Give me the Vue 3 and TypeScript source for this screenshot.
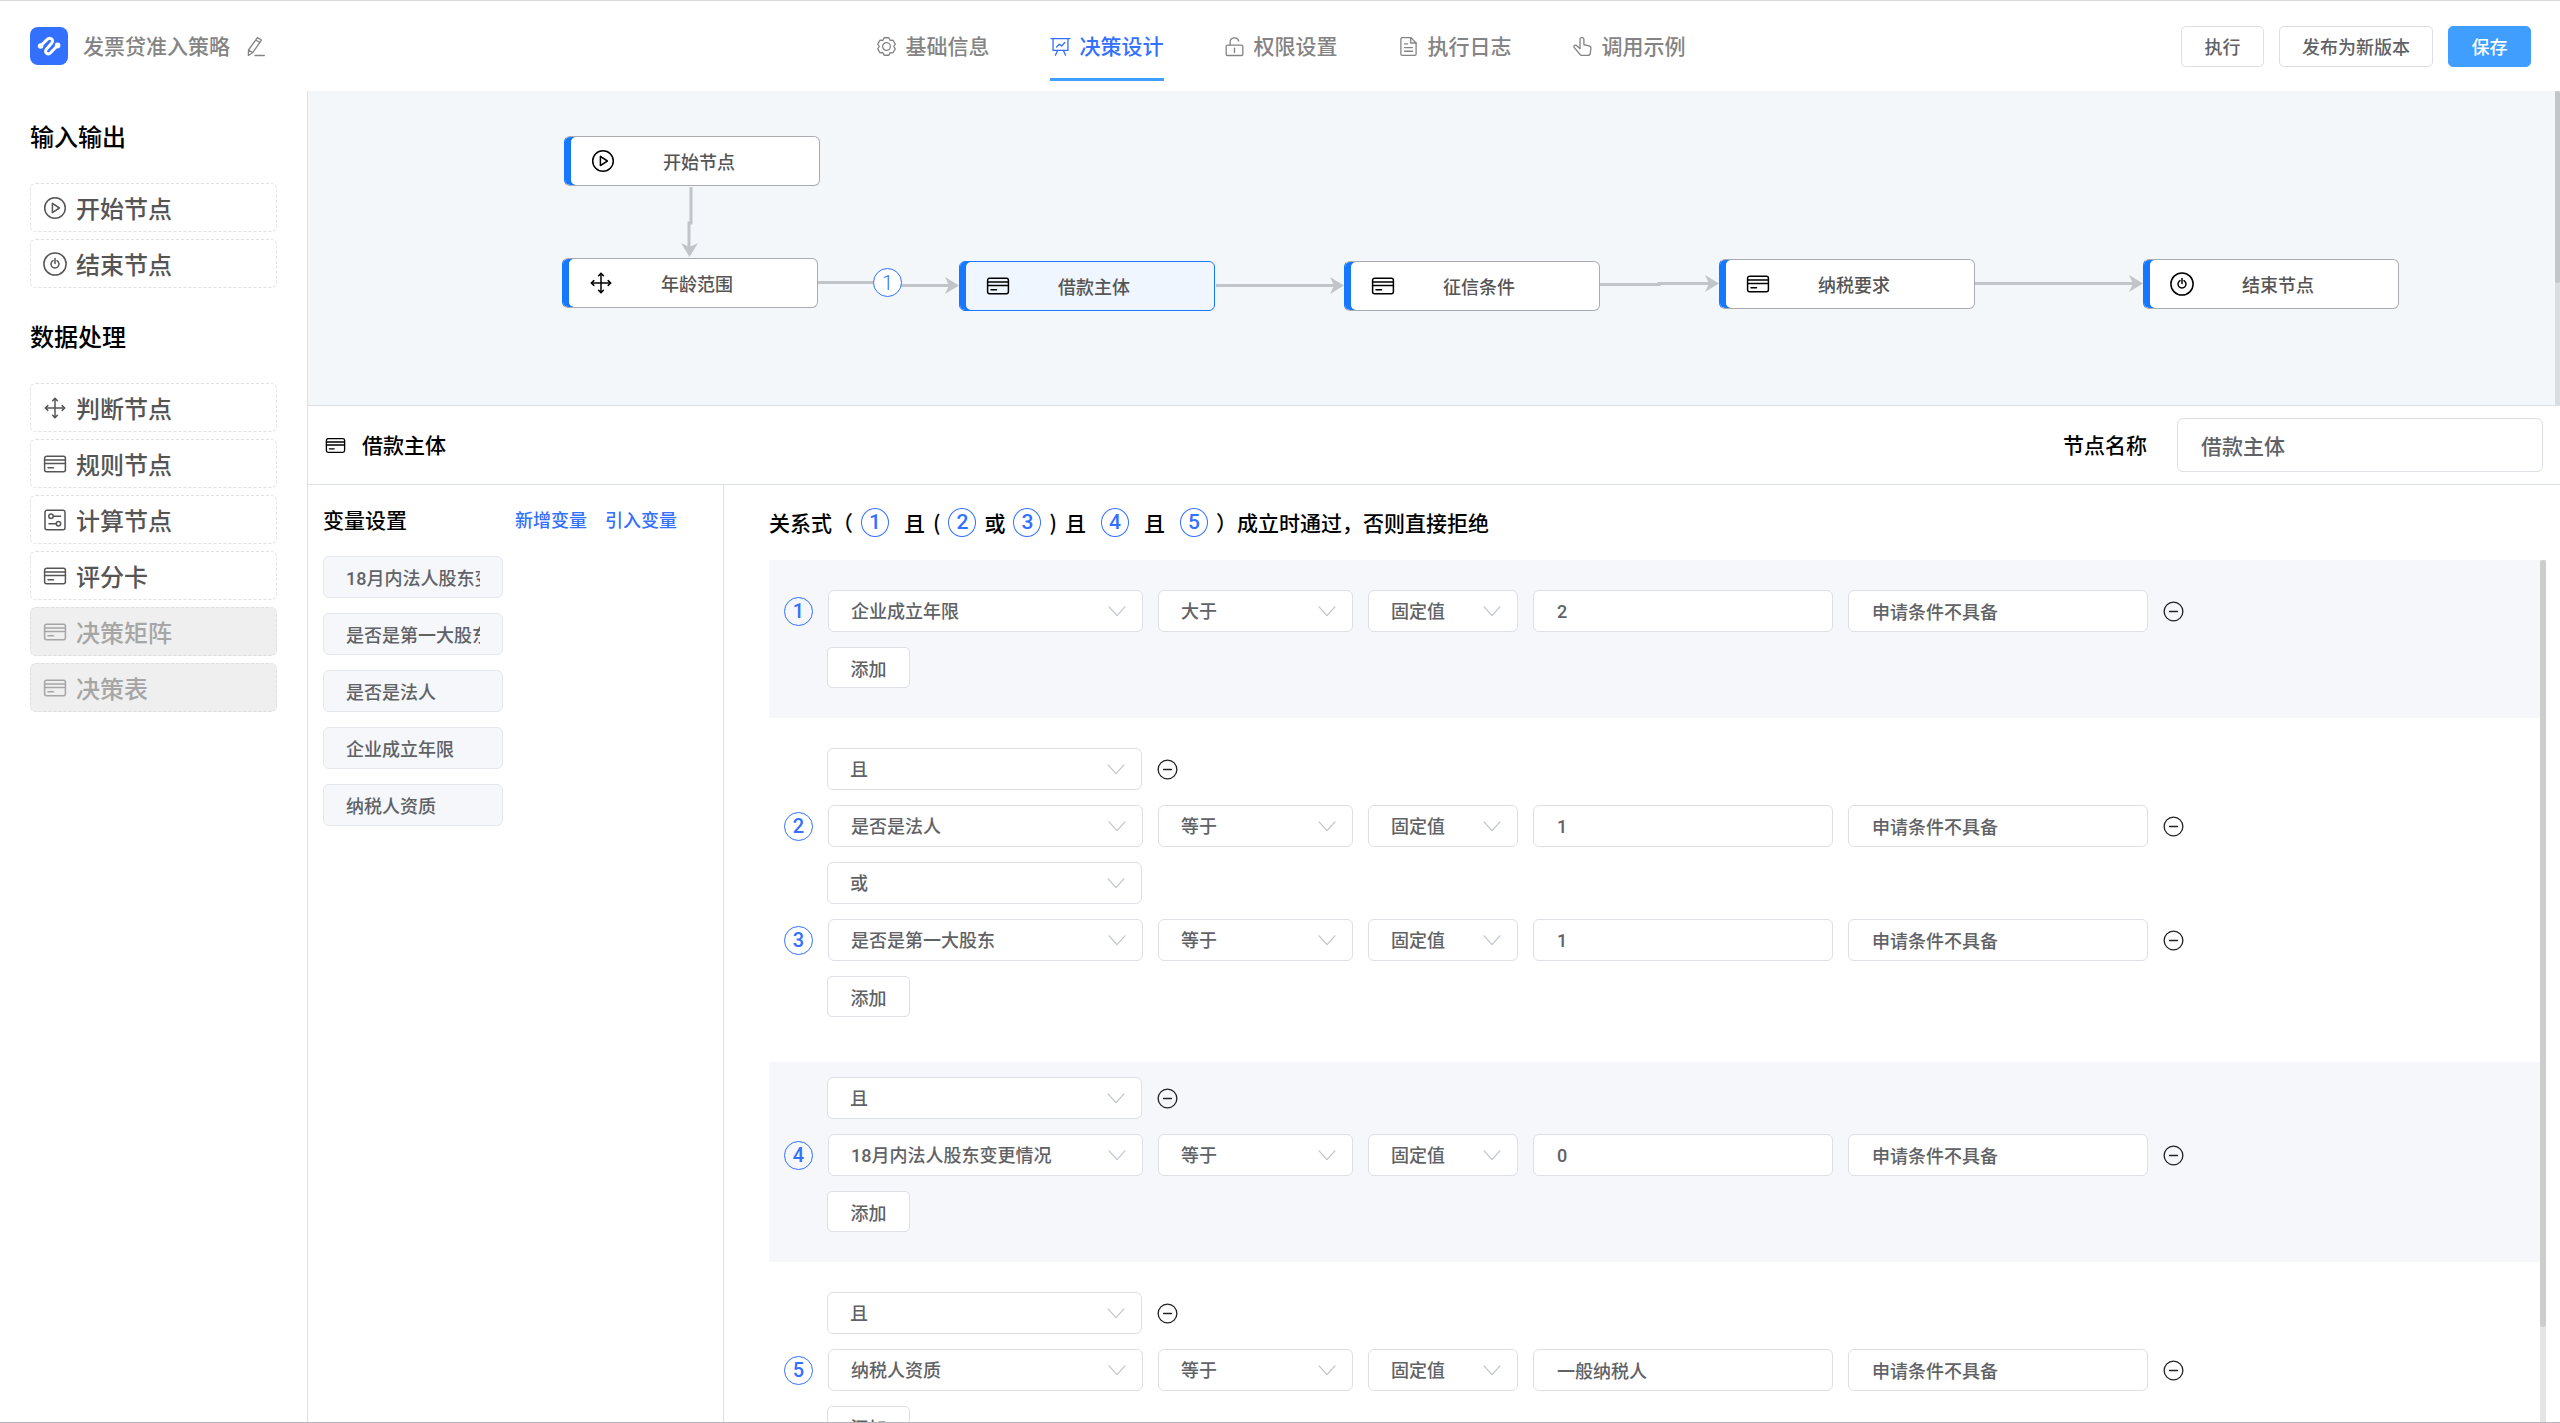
<script setup lang="ts">
import { h, reactive, ref, type FunctionalComponent } from 'vue'

type IconName =
  | 'play' | 'power' | 'move' | 'card' | 'calc' | 'gear' | 'board'
  | 'unlock' | 'doc' | 'pointer' | 'edit' | 'minus' | 'arrow'

// Stroke outlines on a 24 x 24 grid
const icons: Record<IconName, string[]> = {
  play: ['M12 1.7a10.3 10.3 0 1 0 0 20.6a10.3 10.3 0 1 0 0-20.6z', 'M9.4 7.4v9.2l7-4.6z'],
  power: ['M12 .9a11.1 11.1 0 1 0 0 22.2a11.1 11.1 0 1 0 0-22.2z', 'M10 8.6a4 4 0 1 0 4 0', 'M12 6.6v5'],
  move: ['M12 2.4v19.2M2.4 12h19.2', 'M9.6 4.8L12 2.4l2.4 2.4M9.6 19.2l2.4 2.4l2.4-2.4M4.8 9.6L2.4 12l2.4 2.4M19.2 9.6l2.4 2.4l-2.4 2.4'],
  card: ['M3.6 4.2h16.8a2 2 0 0 1 2 2v11.6a2 2 0 0 1-2 2H3.6a2 2 0 0 1-2-2V6.2a2 2 0 0 1 2-2z', 'M1.6 8h20.8M1.6 11.4h20.8M5 15.8h5.5'],
  calc: ['M4 2.2h16a2 2 0 0 1 2 2v15.6a2 2 0 0 1-2 2H4a2 2 0 0 1-2-2V4.2a2 2 0 0 1 2-2z', 'M8 6a2.2 2.2 0 1 0 0 4.4a2.2 2.2 0 1 0 0-4.4zM10.5 8.2h7', 'M15.5 13.6a2.2 2.2 0 1 0 0 4.4a2.2 2.2 0 1 0 0-4.4zM6 15.8h7'],
  gear: ['M9.3 2h5.4l1.5 3l3.3-.2l2.5 4.5l-1.7 2.7l1.7 2.7l-2.5 4.5l-3.3-.2l-1.5 3H9.3l-1.5-3l-3.3.2L2 14.7L3.7 12L2 9.3l2.5-4.5l3.3.2z', 'M12 7.6a4.4 4.4 0 1 0 0 8.8a4.4 4.4 0 1 0 0-8.8z'],
  board: ['M1.2 3h21.6M3.5 3v13.5h17V3', 'M7.5 12.5l3.2-3.2l2.6 2.2l3.6-4', 'M8.6 16.5l-2.4 5.5M15.4 16.5l2.4 5.5'],
  unlock: ['M4 10.5h16a1.5 1.5 0 0 1 1.5 1.5v8.8a1.5 1.5 0 0 1-1.5 1.5H4a1.5 1.5 0 0 1-1.5-1.5V12a1.5 1.5 0 0 1 1.5-1.5z', 'M7 10.5V7.2a5 5 0 0 1 9.8-1.4', 'M12 14v4.8'],
  doc: ['M14.5 1.8H4.8a1.5 1.5 0 0 0-1.5 1.5v17.4a1.5 1.5 0 0 0 1.5 1.5h14.4a1.5 1.5 0 0 0 1.5-1.5V8z', 'M14.5 1.8V8h6.2M7.5 9h3.5M7.5 13.2h9M7.5 17.4h9'],
  pointer: ['M9.2 14.5V4a2.2 2.2 0 0 1 4.4 0v6l5.8 1.3a2.8 2.8 0 0 1 2.2 3l-.7 5.2a3 3 0 0 1-3 2.6h-6.5a3 3 0 0 1-2.4-1.2L2.4 13c-.9-1.3.5-3.2 2.3-2.3z'],
  edit: ['M14.2 1.8l4.6 2.8L9 18.8l-5.2 3.4l.2-6.2zM12.3 4.6l4.7 2.9M4 16.2l4.7 2.7', 'M11.5 22.3H22'],
  minus: ['M12 1.3a10.7 10.7 0 1 0 0 21.4a10.7 10.7 0 1 0 0-21.4z', 'M7.5 12h9'],
  arrow: ['M2.5 7l9.5 10.5L21.5 7'],
}

const Icon: FunctionalComponent<{ name: IconName }> = (props) =>
  h(
    'svg',
    { viewBox: '0 0 24 24', fill: 'none', stroke: 'currentColor', 'stroke-linecap': 'round', 'stroke-linejoin': 'round', 'aria-hidden': 'true' },
    icons[props.name].map((d) => h('path', { d })),
  )
Icon.props = ['name']

const tabs: { label: string; icon: IconName }[] = [
  { label: '基础信息', icon: 'gear' },
  { label: '决策设计', icon: 'board' },
  { label: '权限设置', icon: 'unlock' },
  { label: '执行日志', icon: 'doc' },
  { label: '调用示例', icon: 'pointer' },
]
const activeTab = ref('决策设计')

const palette: { title: string; items: { label: string; icon: IconName; disabled?: boolean }[] }[] = [
  {
    title: '输入输出',
    items: [
      { label: '开始节点', icon: 'play' },
      { label: '结束节点', icon: 'power' },
    ],
  },
  {
    title: '数据处理',
    items: [
      { label: '判断节点', icon: 'move' },
      { label: '规则节点', icon: 'card' },
      { label: '计算节点', icon: 'calc' },
      { label: '评分卡', icon: 'card' },
      { label: '决策矩阵', icon: 'card', disabled: true },
      { label: '决策表', icon: 'card', disabled: true },
    ],
  },
]

// Node positions on the free canvas
const nodes: { label: string; icon: IconName; x: number; y: number }[] = [
  { label: '开始节点', icon: 'play', x: 256, y: 45 },
  { label: '年龄范围', icon: 'move', x: 254, y: 167 },
  { label: '借款主体', icon: 'card', x: 651, y: 170 },
  { label: '征信条件', icon: 'card', x: 1036, y: 170 },
  { label: '纳税要求', icon: 'card', x: 1411, y: 168 },
  { label: '结束节点', icon: 'power', x: 1835, y: 168 },
]
const selectedNode = ref('借款主体')

const edges = [
  'M383 96V132H381V158',
  'M510 191.5H580V194.5H643',
  'M908 194.5H1028',
  'M1292 193.5H1351V192.5H1403',
  'M1667 192.5H1827',
]
const arrows = [
  'M381.5 166l-8.5-14l8.5 4l8.5-4z',
  'M651 194.5l-14-8.5l4 8.5l-4 8.5z',
  'M1036 194.5l-14-8.5l4 8.5l-4 8.5z',
  'M1411 192.5l-14-8.5l4 8.5l-4 8.5z',
  'M1835 192.5l-14-8.5l4 8.5l-4 8.5z',
]

const nodeName = ref('借款主体')
const variables = ['18月内法人股东变更情况', '是否是第一大股东', '是否是法人', '企业成立年限', '纳税人资质']
const operators = ['大于', '等于', '小于']

interface Rule { no: number; join?: string; removable?: boolean; field: string; op: string; kind: string; value: string; reason: string }
const blocks = reactive<Rule[][]>([
  [{ no: 1, field: '企业成立年限', op: '大于', kind: '固定值', value: '2', reason: '申请条件不具备' }],
  [
    { no: 2, join: '且', removable: true, field: '是否是法人', op: '等于', kind: '固定值', value: '1', reason: '申请条件不具备' },
    { no: 3, join: '或', field: '是否是第一大股东', op: '等于', kind: '固定值', value: '1', reason: '申请条件不具备' },
  ],
  [{ no: 4, join: '且', removable: true, field: '18月内法人股东变更情况', op: '等于', kind: '固定值', value: '0', reason: '申请条件不具备' }],
  [{ no: 5, join: '且', removable: true, field: '纳税人资质', op: '等于', kind: '固定值', value: '一般纳税人', reason: '申请条件不具备' }],
])
</script>

<template>
  <div class="page">
    <header class="topbar">
      <div class="brand">
        <svg class="logo" viewBox="0 0 38 38" aria-hidden="true">
          <rect width="38" height="38" rx="8" fill="#3370ff" />
          <path d="M10.5 19L17 12.6C20 9.8 24.5 12.5 21.8 16L16.4 22.2C13.8 25.6 18 28.6 20.8 25.6L27.6 18.5" fill="none" stroke="#fff" stroke-width="3" stroke-linecap="round" stroke-linejoin="round" />
          <circle cx="10.6" cy="19" r="2.8" fill="#fff" />
          <circle cx="27.6" cy="18.4" r="2.8" fill="#fff" />
        </svg>
        <h1 class="brand-name">发票贷准入策略</h1>
        <button class="icon-btn" type="button" aria-label="编辑名称"><Icon name="edit" class="ico-21" /></button>
      </div>
      <nav class="tabs">
        <a v-for="t in tabs" :key="t.label" href="#" class="tab" :class="{ active: t.label === activeTab }" @click.prevent="activeTab = t.label">
          <Icon :name="t.icon" class="ico-21" />{{ t.label }}
        </a>
      </nav>
      <div class="actions">
        <button class="btn" type="button">执行</button>
        <button class="btn" type="button">发布为新版本</button>
        <button class="btn primary" type="button">保存</button>
      </div>
    </header>

    <div class="body">
      <aside class="palette">
        <section v-for="g in palette" :key="g.title" class="group">
          <h2 class="group-title">{{ g.title }}</h2>
          <button v-for="i in g.items" :key="i.label" class="palette-item" type="button" :disabled="i.disabled">
            <Icon :name="i.icon" class="ico-24" />{{ i.label }}
          </button>
        </section>
      </aside>

      <main class="work">
        <section class="canvas">
          <svg class="edges" aria-hidden="true">
            <path v-for="d in edges" :key="d" :d="d" fill="none" stroke="#c0c5c9" stroke-width="3" />
            <path v-for="d in arrows" :key="d" :d="d" fill="#c0c5c9" />
          </svg>
          <span class="edge-label circle">1</span>
          <button
            v-for="n in nodes" :key="n.label" type="button" class="node" :class="{ selected: n.label === selectedNode }"
            :style="{ left: n.x + 'px', top: n.y + 'px' }" @click="selectedNode = n.label"
          >
            <Icon :name="n.icon" class="ico-24" /><span class="node-label">{{ n.label }}</span>
          </button>
          <div class="rail canvas-rail"><div class="thumb canvas-thumb"></div></div>
        </section>

        <div class="detail-head">
          <Icon name="card" class="ico-21" />
          <h2 class="detail-title">借款主体</h2>
          <label class="name-label" for="node-name">节点名称</label>
          <input id="node-name" v-model="nodeName" class="field name-input" type="text" />
        </div>

        <div class="detail">
          <section class="vars">
            <div class="vars-head">
              <h3 class="vars-title">变量设置</h3>
              <a href="#" class="link">新增变量</a>
              <a href="#" class="link">引入变量</a>
            </div>
            <input v-for="v in variables" :key="v" class="field var" type="text" readonly :value="v" :aria-label="v" />
          </section>

          <section class="rules">
            <div class="formula">
              <span>关系式（</span><b class="circle wide-after">1</b><span>且</span><span>(</span><b class="circle">2</b>
              <span>或</span><b class="circle">3</b><span>)</span><span>且</span><b class="circle wide">4</b>
              <span>且</span><b class="circle wide-before">5</b><span>）成立时通过，否则直接拒绝</span>
            </div>
            <div class="scroller">
              <div class="blocks">
                <div v-for="(b, bi) in blocks" :key="bi" class="block">
                  <template v-for="r in b" :key="r.no">
                    <div v-if="r.join" class="row join">
                      <span class="select w-field">
                        <select v-model="r.join" class="field" aria-label="逻辑关系"><option>且</option><option>或</option></select>
                        <Icon name="arrow" class="caret" />
                      </span>
                      <button v-if="r.removable" class="icon-btn dark" type="button" aria-label="删除分组"><Icon name="minus" class="ico-21" /></button>
                    </div>
                    <div class="row">
                      <span class="circle">{{ r.no }}</span>
                      <span class="select w-field">
                        <select v-model="r.field" class="field" aria-label="变量"><option v-for="v in variables" :key="v">{{ v }}</option></select>
                        <Icon name="arrow" class="caret" />
                      </span>
                      <span class="select w-op">
                        <select v-model="r.op" class="field" aria-label="比较符"><option v-for="o in operators" :key="o">{{ o }}</option></select>
                        <Icon name="arrow" class="caret" />
                      </span>
                      <span class="select w-kind">
                        <select v-model="r.kind" class="field" aria-label="值类型"><option>固定值</option><option>变量</option></select>
                        <Icon name="arrow" class="caret" />
                      </span>
                      <input v-model="r.value" class="field w-text" type="text" aria-label="比较值" />
                      <input v-model="r.reason" class="field w-text" type="text" aria-label="拒绝原因" />
                      <button class="icon-btn dark" type="button" aria-label="删除条件"><Icon name="minus" class="ico-21" /></button>
                    </div>
                  </template>
                  <button class="btn add" type="button">添加</button>
                </div>
              </div>
              <div class="rail"><div class="thumb rules-thumb"></div></div>
            </div>
          </section>
        </div>
      </main>
    </div>
  </div>
</template>

<style>
html,
body,
#app {
  height: 100%;
}
body {
  margin: 0;
}
</style>

<style scoped>
.page,
.page * {
  box-sizing: border-box;
}
.page {
  display: flex;
  flex-direction: column;
  height: 100%;
  overflow: hidden;
  border-top: 1px solid #dadada;
  border-bottom: 1px solid #b4b4bc;
  background: #fff;
  color: #000;
  font: 500 18px/1.5 "Noto Sans CJK SC", sans-serif;
}
h1,
h2,
h3 {
  margin: 0;
  font-weight: 500;
}
button,
input,
select {
  font: inherit;
}
a {
  text-decoration: none;
}
svg {
  flex: none;
  stroke-width: 1.5;
}
.ico-21 {
  width: 21px;
  height: 21px;
}
.ico-24 {
  width: 24px;
  height: 24px;
}
.icon-btn {
  display: flex;
  padding: 0;
  border: 0;
  background: none;
  color: inherit;
}
.dark {
  color: #222;
}

/* top bar */
.topbar {
  display: grid;
  grid-template-columns: 1fr auto 1fr;
  align-items: center;
  height: 90px;
  flex: none;
  padding: 0 29px 0 30px;
  color: #848484;
}
.brand {
  display: flex;
  align-items: center;
  gap: 15px;
}
.logo {
  width: 38px;
  height: 38px;
}
.brand-name {
  font-size: 21px;
}
.tabs {
  display: flex;
  gap: 60px;
}
.tab {
  display: flex;
  align-items: center;
  gap: 9px;
  height: 70px;
  color: inherit;
  font-size: 21px;
}
.tab.active {
  color: #3370ff;
  box-shadow: inset 0 -3px #409eff;
}
.actions {
  display: flex;
  justify-content: flex-end;
  gap: 15px;
}
.btn {
  min-width: 83px;
  height: 41px;
  padding: 0 22px;
  border: 1px solid #dcdfe6;
  border-radius: 5px;
  background: #fff;
  color: #606266;
  line-height: 24px;
}
.btn.primary {
  border-color: #409eff;
  background: #409eff;
  color: #fff;
}

/* palette */
.body {
  display: flex;
  flex: 1;
  min-height: 0;
}
.palette {
  display: flex;
  flex-direction: column;
  flex: none;
  gap: 30px;
  width: 308px;
  padding: 27px 30px;
  border-right: 1px solid #dce1e8;
}
.group {
  display: flex;
  flex-direction: column;
  gap: 7px;
}
.group-title {
  margin-bottom: 22px;
  font-size: 24px;
  line-height: 36px;
}
.palette-item {
  display: flex;
  align-items: center;
  gap: 9px;
  height: 49px;
  padding: 0 12px;
  border: 1px dashed #dfe1e6;
  border-radius: 6px;
  background: #fff;
  color: #555;
  font-size: 24px;
  line-height: 36px;
}
.palette-item:disabled {
  border-color: #dedede;
  background: #efefef;
  color: #a6a6a6;
}

/* flow canvas */
.work {
  display: flex;
  flex: 1;
  flex-direction: column;
  min-width: 0;
}
.canvas {
  position: relative;
  flex: none;
  height: 315px;
  border-bottom: 1px solid #dce1e8;
  background: #f3f7fa;
}
.edges {
  position: absolute;
  width: 100%;
  height: 100%;
}
.node {
  position: absolute;
  display: flex;
  align-items: center;
  width: 256px;
  height: 50px;
  padding: 0 0 0 26px;
  overflow: hidden;
  border: 1px solid #a8abb2;
  border-left-color: #1677ff;
  border-radius: 6px;
  background: #fff;
  box-shadow: inset 6px 0 #1677ff;
  color: #000;
}
.node.selected {
  border-color: #1677ff;
  background: #eff6ff;
}
.node .ico-24 {
  margin-right: 48px;
}
.node-label {
  color: #555;
}
.circle {
  display: inline-flex;
  align-items: center;
  justify-content: center;
  flex: none;
  width: 29px;
  height: 29px;
  border: 1px solid #3370ff;
  border-radius: 50%;
  color: #3370ff;
  font-family: Roboto, "Noto Sans CJK SC", sans-serif;
  font-size: 20px;
  font-weight: 500;
}
.edge-label {
  position: absolute;
  left: 565px;
  top: 177px;
  background: #fff;
  font-weight: 300;
}
.rail {
  flex: none;
  width: 6px;
  background: #e5e5e5;
}
.canvas-rail {
  position: absolute;
  top: 0;
  right: 0;
  bottom: 0;
  width: 5px;
  background: #dadde0;
}
.thumb {
  border-radius: 3px;
  background: #cdcdcd;
}
.canvas-thumb {
  height: 61%;
  background: #c3c6c8;
}

/* detail header */
.detail-head {
  display: flex;
  align-items: center;
  flex: none;
  height: 79px;
  padding: 0 17px;
  border-bottom: 1px solid #dce1e8;
  font-size: 21px;
}
.detail-title {
  margin-left: 16px;
  font-size: 21px;
}
.name-label {
  margin-left: auto;
}
.field {
  width: 100%;
  height: 42px;
  padding: 0 23px;
  border: 1px solid #dcdfe6;
  border-radius: 6px;
  outline: 0;
  background: #fff;
  color: #606266;
  font-family: Roboto, "Noto Sans CJK SC", sans-serif;
}
.select .field {
  padding: 0 22px;
}
.name-input {
  width: 366px;
  height: 54px;
  margin-left: 30px;
}

/* variables */
.detail {
  display: flex;
  flex: 1;
  min-height: 0;
}
.vars {
  display: flex;
  flex-direction: column;
  flex: none;
  gap: 15px;
  width: 416px;
  padding: 16px 15px;
  border-right: 1px solid #dce1e8;
}
.vars-head {
  display: flex;
  align-items: center;
  gap: 18px;
  margin: 0 31px 4px 0;
  line-height: 36px;
}
.vars-title {
  margin-right: auto;
  font-size: 21px;
}
.link {
  color: #3370ff;
}
.var {
  width: 180px;
  padding: 0 22px;
  border-color: #e4e7ed;
  background: #f5f7fb;
}

/* rules */
.rules {
  display: flex;
  flex: 1;
  flex-direction: column;
  min-width: 0;
  padding: 19px 14px 0 45px;
}
.formula {
  display: flex;
  align-items: center;
  flex: none;
  gap: 8px;
  margin-bottom: 20px;
  font-size: 21px;
  line-height: 36px;
}
.formula .circle {
  width: 28px;
  font-size: 21px;
}
.wide,
.wide-after {
  margin-right: 7px;
}
.wide,
.wide-before {
  margin-left: 7px;
}
.scroller {
  display: flex;
  flex: 1;
  min-height: 0;
  overflow: hidden;
}
.blocks {
  flex: 1;
  min-width: 0;
}
.block {
  display: flex;
  flex-direction: column;
  gap: 15px;
  padding: 30px 15px;
}
.block:nth-child(odd) {
  background: #f5f7fb;
}
.block:nth-child(3) {
  margin-top: 15px;
  padding-top: 15px;
}
.row {
  display: flex;
  align-items: center;
  gap: 15px;
}
.join,
.add {
  margin-left: 43px;
}
.add {
  align-self: flex-start;
}
.select {
  position: relative;
  flex: none;
}
.select .field {
  display: block;
  appearance: none;
}
.caret {
  position: absolute;
  top: 11px;
  right: 16px;
  width: 20px;
  height: 20px;
  color: #c0c4cc;
  pointer-events: none;
}
.w-field {
  width: 315px;
}
.w-op {
  width: 195px;
}
.w-kind {
  width: 150px;
}
.w-text {
  width: 300px;
}
.rules-thumb {
  height: 89%;
}
</style>
